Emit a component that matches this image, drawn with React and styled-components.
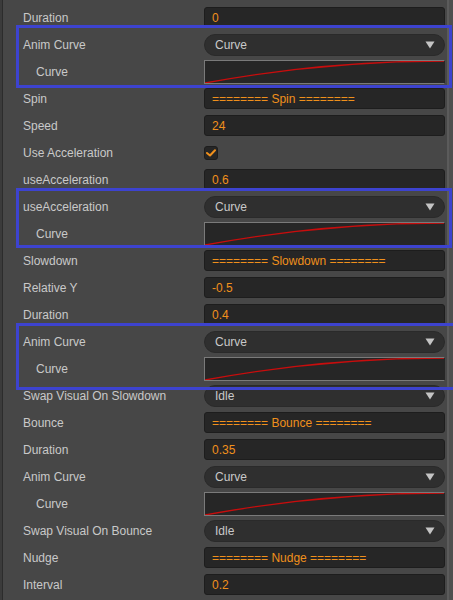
import React from 'react';
import styled, { createGlobalStyle } from 'styled-components';

const GlobalStyle = createGlobalStyle`
  html, body {
    margin: 0;
    padding: 0;
    background: #474747;
    overflow: hidden;
  }
  body {
    font-family: "Liberation Sans", Arial, sans-serif;
    font-size: 12px;
  }
`;

const Panel = styled.div`
  display: flex;
  width: 453px;
  height: 600px;
  background: #474747;
  overflow: hidden;
`;

const LeftEdge = styled.div`
  width: 2px;
  flex: none;
  background: #3b3b3b;
  border-right: 1px solid #2c2c2c;
`;

const Content = styled.div`
  flex: 1;
  padding-top: 4px;
  display: flex;
  flex-direction: column;
`;

const Scrollbar = styled.div`
  width: 6px;
  flex: none;
  background: #4f4f4f;
  border-left: 2px solid #5b5b5b;
  box-sizing: border-box;
`;

const Group = styled.div`
  position: relative;
  &::after {
    content: '';
    position: absolute;
    left: 13px;
    right: ${(p) => p.$right}px;
    top: ${(p) => p.$top}px;
    bottom: ${(p) => p.$bottom}px;
    border: 3px solid #3d43cf;
    pointer-events: none;
  }
`;

const Row = styled.div`
  display: grid;
  grid-template-columns: 1fr 241px;
  align-items: center;
  height: 27px;
  padding: 0 2px 0 20px;
`;

const Label = styled.div`
  color: #c9c9c9;
  padding-left: ${(p) => (p.$sub ? 13 : 0)}px;
  white-space: nowrap;
`;

const TextField = styled.div`
  height: 21px;
  box-sizing: border-box;
  background: #262626;
  border: 1px solid #1d1d1d;
  border-radius: 3px;
  padding: 0 7px;
  display: flex;
  align-items: center;
  color: #f0901c;
  white-space: nowrap;
`;

const Dropdown = styled.div`
  height: 22px;
  box-sizing: border-box;
  background: #2f2f2f;
  border: 1px solid #2a2a2a;
  border-radius: 11px;
  padding: 0 9px 0 10px;
  display: flex;
  align-items: center;
  justify-content: space-between;
  color: #c9c9c9;
`;

const CurveBox = styled.div`
  height: 24px;
  box-sizing: border-box;
  background: #262626;
  border: 1px solid #7a7a7a;
  border-right-color: #262626;
  display: flex;
`;

const CurveSvg = styled.svg`
  width: 100%;
  height: 100%;
  display: block;
`;

const CheckBox = styled.div`
  width: 14px;
  height: 14px;
  box-sizing: border-box;
  background: #262626;
  border: 1px solid #1d1d1d;
  border-radius: 3px;
  display: flex;
  align-items: center;
  justify-content: center;
`;

const Arrow = () => (
  <svg width="10" height="8" viewBox="0 0 10 8">
    <path d="M0.5 0.5 H9.5 L5 7.5 Z" fill="#c4c4c4" />
  </svg>
);

const Check = () => (
  <svg width="10" height="8" viewBox="0 0 10 8">
    <path d="M1 4 L4 6.5 L9 1.2" fill="none" stroke="#f0901c" strokeWidth="2" strokeLinecap="round" strokeLinejoin="round" />
  </svg>
);

const Curve = () => (
  <CurveBox>
    <CurveSvg viewBox="0 0 240 22" preserveAspectRatio="none">
      <path d="M0 22 Q120 0 240 0" fill="none" stroke="#c80d0d" strokeWidth="1.4" />
    </CurveSvg>
  </CurveBox>
);

const Field = ({ item }) => {
  if (item.type === 'select') {
    return (
      <Dropdown>
        <span>{item.value}</span>
        <Arrow />
      </Dropdown>
    );
  }
  if (item.type === 'curve') return <Curve />;
  if (item.type === 'check') {
    return (
      <CheckBox>
        <Check />
      </CheckBox>
    );
  }
  return <TextField>{item.value}</TextField>;
};

const PropRow = ({ item }) => (
  <Row>
    <Label $sub={item.sub}>{item.label}</Label>
    <Field item={item} />
  </Row>
);

const header = (name) => `======== ${name} ========`;

const sections = [
  { rows: [{ label: 'Duration', value: '0' }] },
  {
    box: { top: -6, bottom: -3, right: -5 },
    rows: [
      { label: 'Anim Curve', type: 'select', value: 'Curve' },
      { label: 'Curve', type: 'curve', sub: true },
    ],
  },
  {
    rows: [
      { label: 'Spin', value: header('Spin') },
      { label: 'Speed', value: '24' },
      { label: 'Use Acceleration', type: 'check' },
      { label: 'useAcceleration', value: '0.6' },
    ],
  },
  {
    box: { top: -5, bottom: -1, right: -5 },
    rows: [
      { label: 'useAcceleration', type: 'select', value: 'Curve' },
      { label: 'Curve', type: 'curve', sub: true },
    ],
  },
  {
    rows: [
      { label: 'Slowdown', value: header('Slowdown') },
      { label: 'Relative Y', value: '-0.5' },
      { label: 'Duration', value: '0.4' },
    ],
  },
  {
    box: { top: -5, bottom: -8, right: -12 },
    rows: [
      { label: 'Anim Curve', type: 'select', value: 'Curve' },
      { label: 'Curve', type: 'curve', sub: true },
    ],
  },
  {
    rows: [
      { label: 'Swap Visual On Slowdown', type: 'select', value: 'Idle' },
      { label: 'Bounce', value: header('Bounce') },
      { label: 'Duration', value: '0.35' },
      { label: 'Anim Curve', type: 'select', value: 'Curve' },
      { label: 'Curve', type: 'curve', sub: true },
      { label: 'Swap Visual On Bounce', type: 'select', value: 'Idle' },
      { label: 'Nudge', value: header('Nudge') },
      { label: 'Interval', value: '0.2' },
    ],
  },
];

export default function App() {
  return (
    <>
      <GlobalStyle />
      <Panel>
        <LeftEdge />
        <Content>
          {sections.map((section, i) => {
            const rows = section.rows.map((item, j) => <PropRow key={j} item={item} />);
            if (!section.box) return <div key={i}>{rows}</div>;
            return (
              <Group key={i} $top={section.box.top} $bottom={section.box.bottom} $right={section.box.right}>
                {rows}
              </Group>
            );
          })}
        </Content>
        <Scrollbar />
      </Panel>
    </>
  );
}
